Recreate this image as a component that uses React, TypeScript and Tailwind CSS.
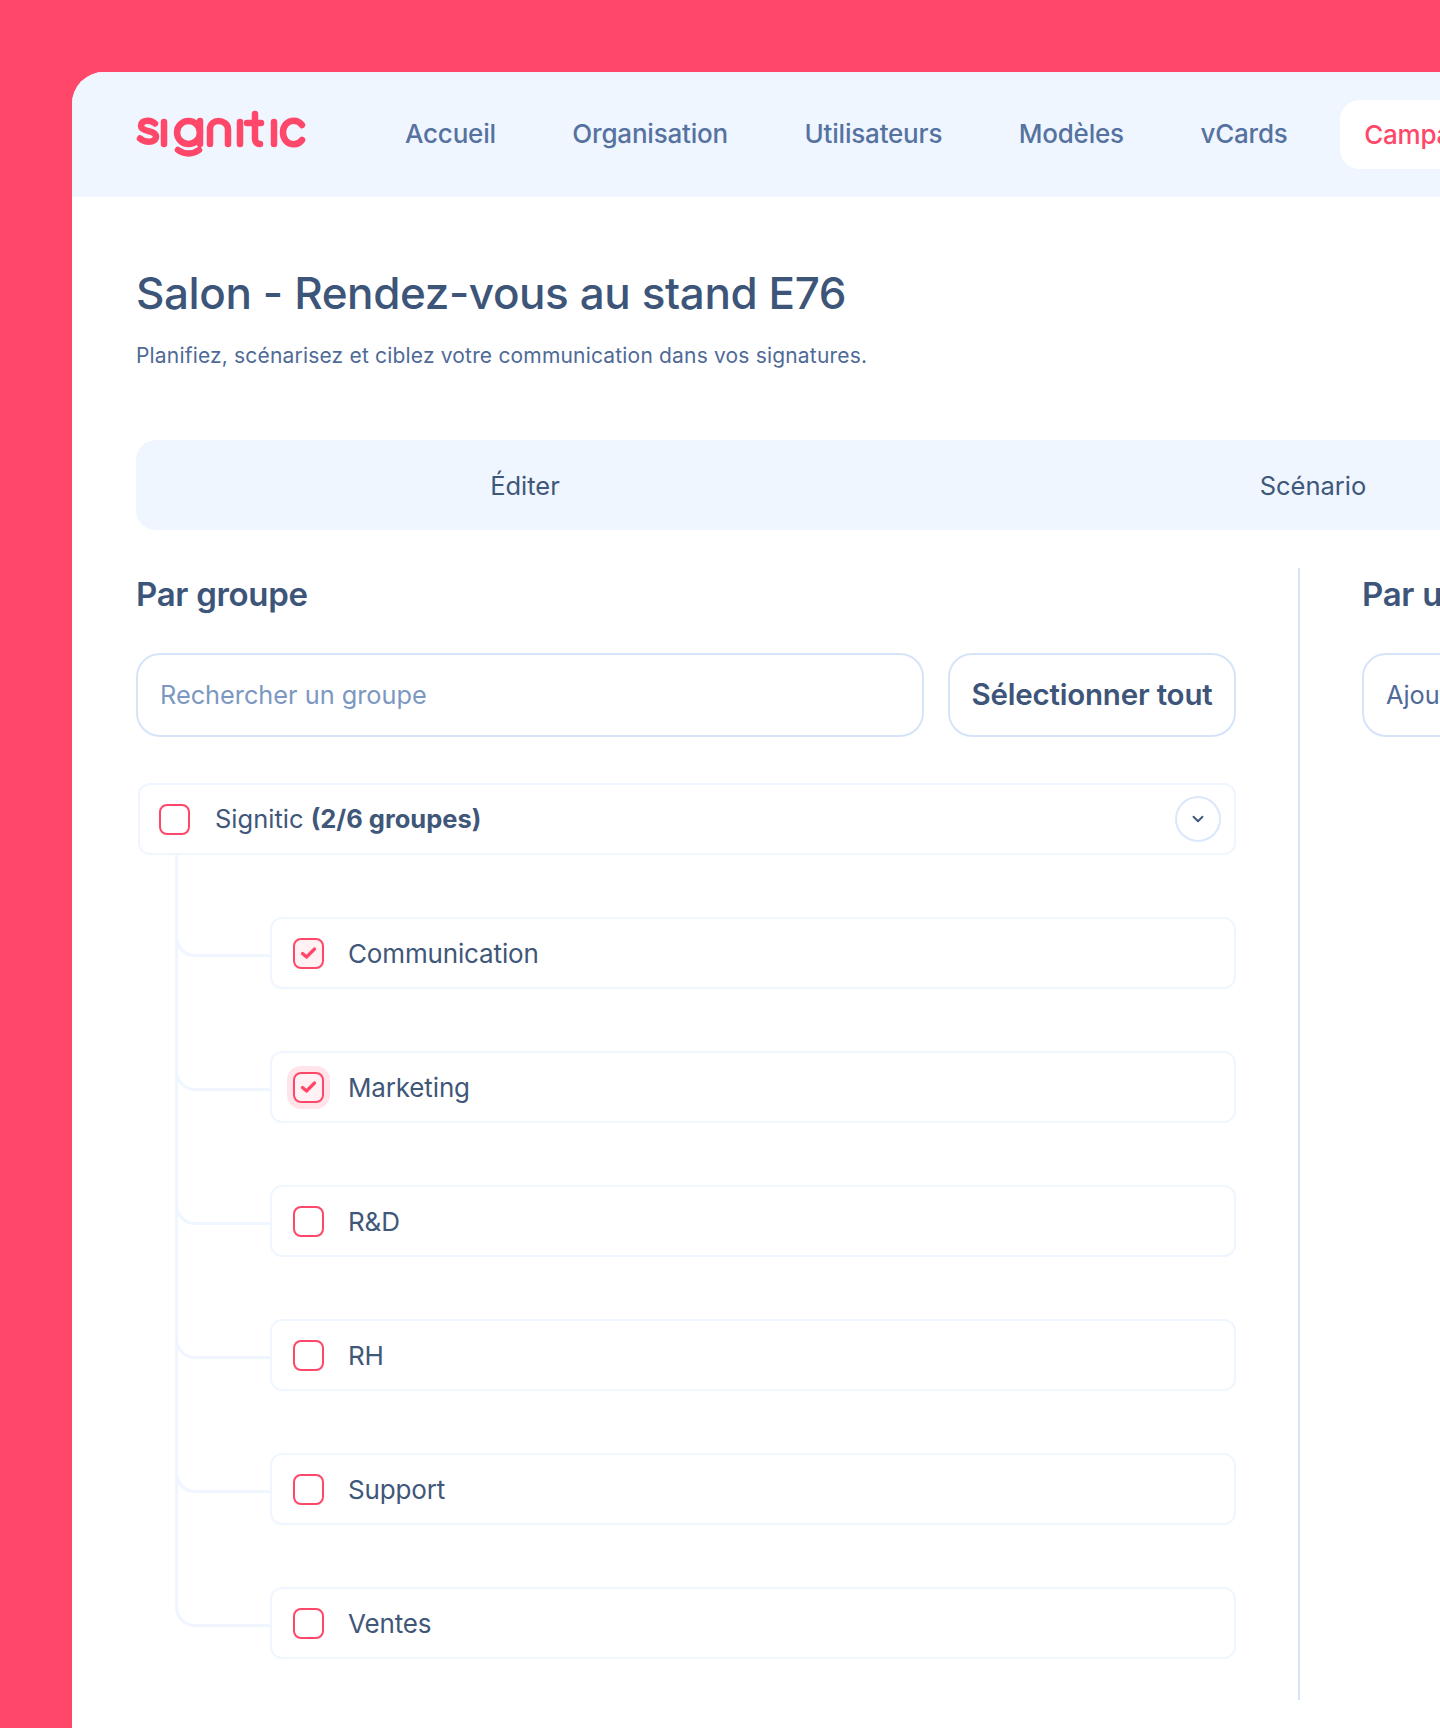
import React from "react";
import { ChevronDown } from "lucide-react";

const font = { fontFamily: '"Inter", "Liberation Sans", sans-serif' };

function Logo() {
  return (
    <svg width="172" height="48" viewBox="0 0 172 48" fill="none" stroke="#ff4769" strokeWidth="6.5" strokeLinecap="round" strokeLinejoin="round" aria-label="signitic">
      <path d="M20 13.500c-2-2-5-3-8-2.800-3.500.2-6 2-6 5 0 3.200 3 4.300 7.500 5.400 4.500 1 7.500 2.300 7.500 5.500 0 3.200-3 5.200-7 5.200-3.500 0-6.500-1.200-9-3.300" />
      <path d="M29 12v22" />
      <circle cx="53.500" cy="22.500" r="11.500" />
      <path d="M65 11v23" />
      <path d="M43 40c6 4.500 15 4.500 21 0" />
      <path d="M75 34V19c0-5 4-8 8.500-8S93 14 93 19v15" />
      <path d="M105 12v22" />
      <path d="M120 4v25c0 3 2 5 5 5" />
      <path d="M112 13h14" />
      <path d="M139 12v22" />
      <path d="M167 15c-2-2.800-5-4.300-8-4.300-6.500 0-11 5-11 11.800s4.500 11.800 11 11.800c3 0 6-1.500 8-4.300" />
    </svg>
  );
}

function Box({ checked, halo }: { checked?: boolean; halo?: boolean }) {
  return (
    <span
      className={`flex h-[31px] w-[31px] flex-none items-center justify-center rounded-[8px] border-2 border-[#ff4769] ${checked ? "bg-[#fff1f4]" : "bg-white"} ${halo ? "ring-[6px] ring-[#ffe4e9]" : ""}`}
    >
      {checked && (
        <svg width="17" height="14" viewBox="0 0 17 14" fill="none">
          <path d="M2.500 7.500 6.500 11 14.500 3" stroke="#ff4769" strokeWidth="3.2" strokeLinecap="round" strokeLinejoin="round" />
        </svg>
      )}
    </span>
  );
}

const nav = ["Accueil", "Organisation", "Utilisateurs", "Modèles", "vCards"];
const groups = ["Communication", "Marketing", "R&D", "RH", "Support", "Ventes"];

export default function App() {
  return (
    <div style={font} className="flex h-[1728px] w-full overflow-hidden bg-[#ff4769] pl-[72px] pt-[72px]">
      <div className="h-full w-[1700px] flex-none overflow-hidden rounded-tl-[32px] bg-white">
        <header className="flex h-[125px] items-center bg-[#eff6ff] pl-[63px]">
          <div className="-mt-[2px] w-[171px] flex-none"><Logo /></div>
          <nav className="ml-[75px] flex items-center gap-[28.500px]">
            {nav.map((n) => (
              <a key={n} className="-mt-[1px] px-[24px] text-[26px] leading-[32px] font-medium tracking-[-0.2px] text-[#56729f]">{n}</a>
            ))}
            <a className="flex h-[69px] items-center rounded-[20px] bg-white px-[24px] text-[26px] font-medium tracking-[-0.2px] text-[#ff4769]">Campagnes</a>
          </nav>
        </header>

        <main className="pl-[64px]">
          <h1 className="mt-[68px] text-[44px] leading-[56px] font-[550] tracking-[-0.4px] text-[#3c5579]">Salon - Rendez-vous au stand E76</h1>
          <p className="mt-[21px] text-[21px] leading-[28px] tracking-[0.18px] text-[#4f6a97]">Planifiez, scénarisez et ciblez votre communication dans vos signatures.</p>

          <div className="mt-[70px] flex h-[90px] items-center gap-[10px] rounded-l-[20px] bg-[#eff6ff] pt-[2px] text-[25.5px] text-[#3f5779]">
            <div className="w-[778px] flex-none text-center">Éditer</div>
            <div className="w-[778px] flex-none text-center">Scénario</div>
          </div>

          <div className="mt-[38px] flex h-[1132px]">
            <section className="w-[1100px] flex-none">
              <h2 className="text-[33px] leading-[52px] font-semibold tracking-[-0.3px] text-[#3c5579]">Par groupe</h2>
              <div className="mt-[33px] flex h-[84px] gap-[24px]">
                <input
                  readOnly
                  placeholder="Rechercher un groupe"
                  className="h-full w-[788px] rounded-[24px] border-2 border-[#d6e4f9] bg-white px-[22px] pb-[1px] text-[25.3px] outline-none placeholder:text-[#7c98c2]"
                />
                <button className="h-full w-[288px] rounded-[24px] border-2 border-[#d6e4f9] bg-white pb-[2px] text-[29.5px] font-semibold tracking-[-0.2px] text-[#3c5579]">
                  Sélectionner tout
                </button>
              </div>

              <div className="mt-[46px] ml-[2px] flex h-[72px] items-center rounded-[12px] border-2 border-[#f0f6ff] pl-[19px] pr-[13px] text-[25.5px] text-[#3f5779]">
                <Box />
                <span className="ml-[25px] pt-[1px]">Signitic <b className="font-bold">(2/6 groupes)</b></span>
                <span className="ml-auto flex h-[46px] w-[46px] items-center justify-center rounded-full border-2 border-[#dbe7fb]">
                  <ChevronDown size={18} strokeWidth={2.5} color="#3f5779" />
                </span>
              </div>

              <div className="ml-[39px]">
                {groups.map((g, i) => (
                  <div key={g} className={`flex h-[134px] border-[#eff6ff] ${i < groups.length - 1 ? "border-l-[3px]" : ""}`}>
                    <div className={`h-[102px] w-[95px] flex-none rounded-bl-[20px] border-b-[3px] border-l-[3px] border-[#eff6ff] ${i < groups.length - 1 ? "-ml-[3px]" : ""}`} />
                    <div className="mt-[62px] flex h-[72px] flex-1 items-center rounded-[12px] border-2 border-[#f0f6ff] bg-white pl-[21px] text-[26px] tracking-[-0.15px] text-[#3f5779]">
                      <Box checked={i < 2} halo={i === 1} />
                      <span className="ml-[24px]">{g}</span>
                    </div>
                  </div>
                ))}
              </div>
            </section>

            <div className="ml-[62px] w-[2px] flex-none bg-[#d6e4f9]" />

            <section className="ml-[62px] w-[500px] flex-none">
              <h2 className="whitespace-nowrap text-[33px] leading-[52px] font-semibold tracking-[-0.3px] text-[#3c5579]">Par utilisateur</h2>
              <input
                readOnly
                placeholder="Ajouter un utilisateur"
                className="mt-[33px] h-[84px] w-full rounded-[24px] border-2 border-[#d6e4f9] bg-white px-[22px] pb-[1px] text-[25.3px] outline-none placeholder:text-[#4f6a97]"
              />
            </section>
          </div>
        </main>
      </div>
    </div>
  );
}
